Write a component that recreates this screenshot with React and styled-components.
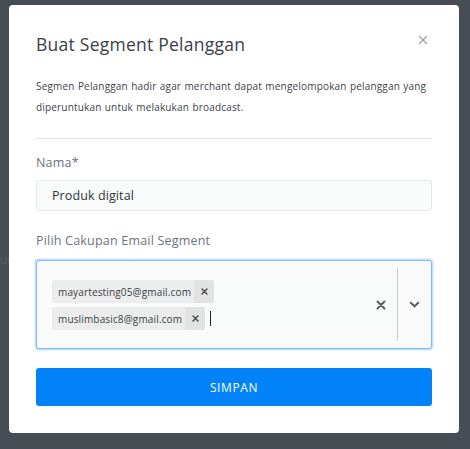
import React from "react";
import styled, { createGlobalStyle } from "styled-components";

const Global = createGlobalStyle`
  html, body { margin: 0; padding: 0; }
  body {
    background: #474d55;
    font-family: "Open Sans", "Noto Sans", sans-serif;
    width: 470px;
    height: 449px;
    overflow: hidden;
    position: relative;
  }
`;

const Backdrop = styled.div`
  position: relative;
  width: 470px;
  height: 449px;
  padding: 5px 0 0 9px;
  box-sizing: border-box;
`;

const GhostText = styled.span`
  position: absolute;
  left: 0;
  top: 251px;
  font-size: 12px;
  color: #5d636b;
`;

const Modal = styled.div`
  position: relative;
  width: 450px;
  height: 428px;
  background: #fff;
  border-radius: 4px;
  box-sizing: border-box;
  padding: 27px 27px 0 27px;
  display: flex;
  flex-direction: column;
`;

const Header = styled.div`
  display: flex;
  justify-content: space-between;
  align-items: flex-start;
`;

const Title = styled.h2`
  margin: 0;
  font-size: 17.5px;
  font-weight: 400;
  color: #3b4048;
  line-height: 24px;
  letter-spacing: 0.25px;
`;

const Close = styled.button`
  border: none;
  background: none;
  padding: 0;
  margin: 3px 2px 0 0;
  width: 12px;
  height: 12px;
  display: flex;
  cursor: pointer;
`;

const Desc = styled.p`
  margin: 20px 0 0;
  font-size: 10px;
  line-height: 21px;
  color: #3d4249;
  letter-spacing: 0.18px;
  word-spacing: 0.5px;
`;

const Divider = styled.hr`
  border: none;
  border-top: 1px solid #e3e5e8;
  margin: 20px 0 0;
`;

const Label = styled.label`
  display: block;
  font-size: 12.5px;
  color: #6c737b;
  line-height: 18px;
  margin-top: ${(p) => p.$mt}px;
  letter-spacing: 0.2px;
`;

const Input = styled.div`
  margin-top: 8px;
  height: 31px;
  box-sizing: border-box;
  border: 1px solid #e6e9ec;
  border-radius: 3px;
  background: #f9fafa;
  display: flex;
  align-items: center;
  padding-left: 15px;
  font-size: 12.5px;
  color: #2f343a;
  letter-spacing: 0.1px;
`;

const Select = styled.div`
  margin-top: 10px;
  height: 89px;
  box-sizing: border-box;
  border: 1px solid #7fbaf7;
  box-shadow: 0 0 0 1.5px rgba(128, 189, 255, 0.45);
  border-radius: 3px;
  background: #f9fafa;
  display: flex;
  align-items: stretch;
`;

const ValueArea = styled.div`
  flex: 1;
  display: flex;
  flex-direction: column;
  align-items: flex-start;
  justify-content: center;
  gap: 4px;
  padding-left: 15px;
  padding-top: 1px;
`;

const ChipRow = styled.div`
  display: flex;
  align-items: center;
  gap: 4px;
`;

const Chip = styled.div`
  display: flex;
  align-items: stretch;
  height: ${(p) => p.$h}px;
  background: #ececec;
  border-radius: 2px;
  font-size: 10px;
  color: #3a3f45;
  letter-spacing: 0.15px;
`;

const ChipLabel = styled.span`
  display: flex;
  align-items: center;
  padding: 0 3px 0 6px;
`;

const ChipRemove = styled.span`
  display: flex;
  align-items: center;
  justify-content: center;
  width: 20px;
  background: #e2e2e2;
  border-radius: 0 2px 2px 0;
`;

const Caret = styled.span`
  width: 1px;
  height: 15px;
  background: #222;
  margin-left: 1px;
`;

const Indicators = styled.div`
  display: flex;
  align-items: center;
`;

const IconBtn = styled.span`
  display: flex;
  align-items: center;
  justify-content: center;
  width: ${(p) => p.$w}px;
`;

const Sep = styled.span`
  align-self: stretch;
  width: 1px;
  background: #c9c9c9;
  margin: 7px 0;
`;

const Button = styled.button`
  margin-top: 19px;
  height: 38px;
  border: none;
  border-radius: 3px;
  background: #0283fa;
  color: #fff;
  font-family: inherit;
  font-size: 12px;
  letter-spacing: 0.6px;
  cursor: pointer;
`;

const XSmall = ({ size = 8, color = "#555", w = 2 }) => (
  <svg width={size} height={size} viewBox="0 0 10 10">
    <path d="M1.5 1.5 L8.5 8.5 M8.5 1.5 L1.5 8.5" stroke={color} strokeWidth={w} strokeLinecap="round" />
  </svg>
);

export default function App() {
  return (
    <>
      <Global />
      <Backdrop>
        <GhostText>ue</GhostText>
        <Modal>
          <Header>
            <Title>Buat Segment Pelanggan</Title>
            <Close aria-label="close">
              <svg width="10" height="10" viewBox="0 0 10 10">
                <path d="M1 1 L9 9 M9 1 L1 9" stroke="#9a9ea3" strokeWidth="1.1" />
              </svg>
            </Close>
          </Header>
          <Desc>
            Segmen Pelanggan hadir agar merchant dapat mengelompokan pelanggan yang diperuntukan untuk melakukan broadcast.
          </Desc>
          <Divider />
          <Label $mt={15}>Nama*</Label>
          <Input>Produk digital</Input>
          <Label $mt={21}>Pilih Cakupan Email Segment</Label>
          <Select>
            <ValueArea>
              <ChipRow>
                <Chip $h={23}>
                  <ChipLabel>mayartesting05@gmail.com</ChipLabel>
                  <ChipRemove>
                    <XSmall size={7} color="#4a4f55" w={2.2} />
                  </ChipRemove>
                </Chip>
              </ChipRow>
              <ChipRow>
                <Chip $h={23}>
                  <ChipLabel>muslimbasic8@gmail.com</ChipLabel>
                  <ChipRemove>
                    <XSmall size={7} color="#4a4f55" w={2.2} />
                  </ChipRemove>
                </Chip>
                <Caret />
              </ChipRow>
            </ValueArea>
            <Indicators>
              <IconBtn $w={33}>
                <XSmall size={10} color="#5b5f64" w={2} />
              </IconBtn>
              <Sep />
              <IconBtn $w={33}>
                <svg width="11" height="7" viewBox="0 0 11 7">
                  <path d="M1.2 1.2 L5.5 5.3 L9.8 1.2" fill="none" stroke="#5b5f64" strokeWidth="2" />
                </svg>
              </IconBtn>
            </Indicators>
          </Select>
          <Button>SIMPAN</Button>
        </Modal>
      </Backdrop>
    </>
  );
}
